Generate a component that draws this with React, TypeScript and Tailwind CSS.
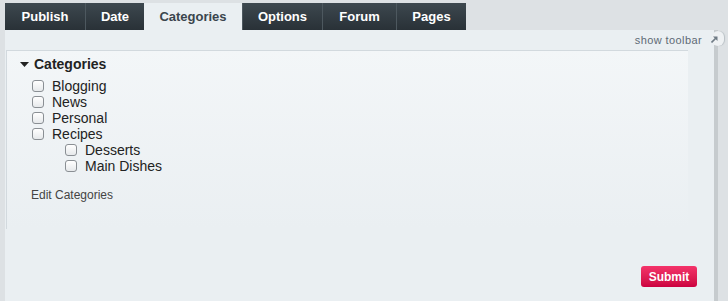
import { ReactNode } from "react";

const tabs = ["Publish", "Date", "Categories", "Options", "Forum", "Pages"];
const widths: Record<string, string> = {
  Publish: "w-[80px]",
  Date: "w-[59px]",
  Categories: "w-[98px]",
  Options: "w-[80px]",
  Forum: "w-[74px]",
  Pages: "w-[70px]",
};

const Box = () => (
  <span className="w-[12px] h-[12px] rounded-[3px] border border-[#8a8f94] bg-gradient-to-b from-white to-[#e6e9eb] shrink-0" />
);

const Row = ({ indent, children }: { indent?: boolean; children: ReactNode }) => (
  <label className={`flex items-center gap-[8px] h-[16px] ${indent ? "pl-[52px]" : "pl-[19px]"}`}>
    <Box />
    <span className="text-[14px] leading-[16px] text-[#222]">{children}</span>
  </label>
);

export default function App() {
  return (
    <div className="w-[728px] h-[301px] bg-[#dde1e4] flex flex-col overflow-hidden font-['Liberation_Sans',Arial,sans-serif]">
      <div className="h-[3px] shrink-0" />
      <div className="flex h-[27px] pl-[5px] shrink-0">
        {tabs.map((t) => {
          const active = t === "Categories";
          return (
            <div
              key={t}
              className={`${widths[t]} flex items-center justify-center text-[13px] font-bold ${
                active
                  ? "bg-[#eaeff2] text-[#3a454d]"
                  : "bg-gradient-to-b from-[#3d484f] to-[#293137] text-white border-l border-[#4d585f] first:border-l-0"
              }`}
            >
              {t}
            </div>
          );
        })}
      </div>
      <div className="flex flex-1">
        <div className="ml-[5px] w-[709px] bg-[#eaeff2] flex flex-col relative">
          <div className="h-[20px] flex items-center justify-end pr-[12px]">
            <span className="text-[11px] tracking-[0.4px] text-[#5e6a75]">show toolbar</span>
          </div>
          <span className="absolute left-[707px] top-[1px] w-[12px] h-[15px] rounded-full bg-[#eef1f3] shadow-[1px_0_1px_#b9c0c5]" />
          <svg className="absolute left-[706px] top-[6px]" width="7" height="7" viewBox="0 0 7 7">
            <path d="M0.5 6.5 L5 2" stroke="#6f7b85" strokeWidth="1.6" />
            <path d="M2 0.5 H6.5 V5 Z" fill="#6f7b85" />
          </svg>
          <div className="ml-[1px] w-[682px] h-[179px] border-l border-t border-[#d2d9de] bg-gradient-to-b from-[#f3f6f8] to-[#eaeff2] pt-[5px] pl-[13px]">
            <div className="flex items-center gap-[5px] h-[16px]">
              <svg width="9" height="5" viewBox="0 0 9 5">
                <path d="M0 0 H9 L4.5 5 Z" fill="#222" />
              </svg>
              <span className="text-[14px] font-bold text-[#222]">Categories</span>
            </div>
            <div className="mt-[6px] flex flex-col -ml-[13px] pl-[6px]">
              <Row>Blogging</Row>
              <Row>News</Row>
              <Row>Personal</Row>
              <Row>Recipes</Row>
              <Row indent>Desserts</Row>
              <Row indent>Main Dishes</Row>
            </div>
            <div className="mt-[14px] pl-[11px] text-[12px] leading-[14px] text-[#444]">Edit Categories</div>
          </div>
          <div className="flex justify-end pr-[17px] pt-[37px]">
            <button className="w-[56px] h-[21px] rounded-[3px] bg-gradient-to-b from-[#f4336a] to-[#cc0040] text-white text-[12px] font-bold">
              Submit
            </button>
          </div>
        </div>
        <div className="w-[4px] bg-[#c6cbce]" />
      </div>
    </div>
  );
}
